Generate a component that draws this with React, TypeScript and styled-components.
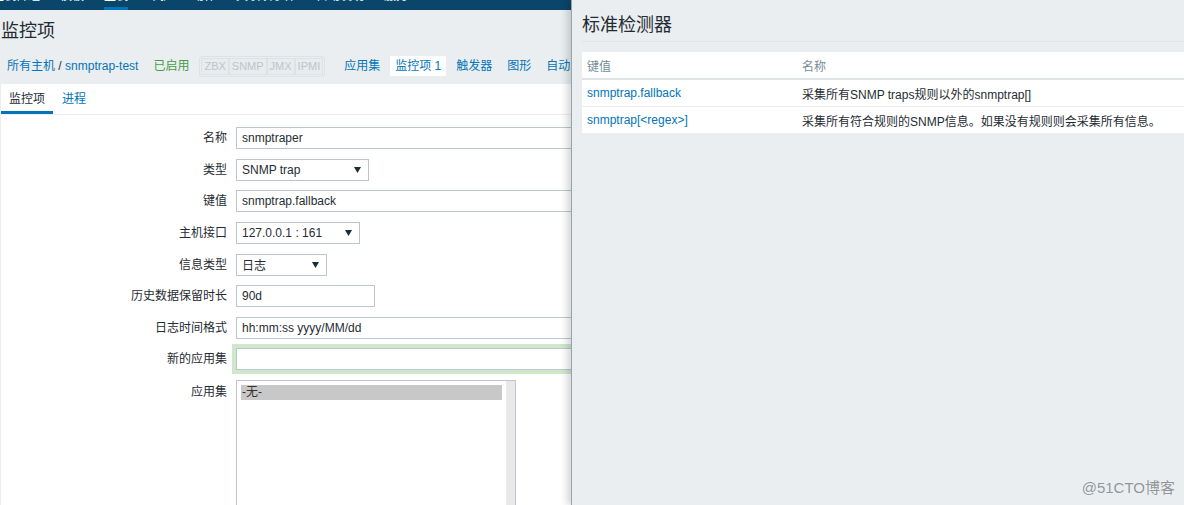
import React from 'react'
import styled, { createGlobalStyle } from 'styled-components'

const GlobalStyle = createGlobalStyle`
  html, body { margin: 0; padding: 0; }
  body {
    background: #ebeef0;
    font-family: Arial, "Liberation Sans", "Noto Sans CJK SC", sans-serif;
    font-size: 12px;
    color: #1f2c33;
  }
`

const Screen = styled.div`
  position: relative;
  width: 1184px;
  height: 505px;
  overflow: hidden;
  background: #ebeef0;
`

// the page underneath the popup; only its left part shows
const Page = styled.div`
  width: 571px;
  height: 505px;
  overflow: hidden;
`

const TopNav = styled.div`
  display: flex;
  height: 10px;
  background: #0a466a;
  overflow: hidden;
`
const NavItem = styled.div<{ $active?: boolean; $first?: boolean }>`
  position: relative;
  height: 10px;
  padding: 0 10px;
  margin-left: ${p => (p.$first ? '-18px' : '0')};
  color: #ffffff;
  &::after {
    content: '';
    display: ${p => (p.$active ? 'block' : 'none')};
    position: absolute;
    left: 10px;
    right: 10px;
    bottom: 0;
    height: 3px;
    background: #0275b8;
  }
`
const NavText = styled.span`
  display: block;
  margin-top: -11px;
  line-height: 14px;
  white-space: nowrap;
`

const Header = styled.div`
  display: flex;
  align-items: center;
  height: 38px;
  padding-left: 1px;
`
const Title = styled.h1`
  margin: 0;
  font-size: 18px;
  font-weight: normal;
  color: #1f2c33;
`

const Breadcrumbs = styled.div`
  display: flex;
  align-items: center;
  gap: 5px;
  height: 36px;
  padding-left: 2px;
  white-space: nowrap;
`
const Crumb = styled.span<{ $tone?: 'link' | 'green'; $selected?: boolean; $push?: number }>`
  padding: 3px 5px;
  margin-left: ${p => p.$push ?? 0}px;
  line-height: 14px;
  color: ${p => (p.$tone === 'green' ? '#429e47' : p.$tone === 'link' ? '#0275b8' : '#1f2c33')};
  background: ${p => (p.$selected ? '#ffffff' : 'transparent')};
`
const Link = styled.span`
  color: #0275b8;
`
const StatusGroup = styled.span`
  display: flex;
  padding: 1px;
  border: 1px solid #dde2e5;
  border-radius: 3px;
`
const StatusTag = styled.span`
  padding: 0 2px;
  border: 1px solid #dde2e5;
  background: #e8ecee;
  color: #bcc5ca;
  font-size: 11px;
  line-height: 15px;
`

const Content = styled.div`
  margin-left: 1px;
  height: 421px;
  background: #ffffff;
`
const Tabs = styled.div`
  display: flex;
  gap: 1px;
  height: 30px;
  border-bottom: 1px solid #ebeef0;
`
const Tab = styled.div<{ $active?: boolean }>`
  display: flex;
  align-items: center;
  box-sizing: border-box;
  height: 30px;
  padding: 0 8px;
  color: ${p => (p.$active ? '#1f2c33' : '#0275b8')};
  border-bottom: 3px solid ${p => (p.$active ? '#0275b8' : 'transparent')};
`

const Form = styled.div`
  display: grid;
  grid-template-columns: 226px 1fr;
  column-gap: 9px;
  row-gap: 9.625px;
  padding-top: 12px;
`
const Label = styled.div<{ $top?: boolean }>`
  text-align: right;
  line-height: 22px;
  align-self: ${p => (p.$top ? 'start' : 'center')};
  padding-top: ${p => (p.$top ? '1px' : '0')};
  white-space: nowrap;
`
const Field = styled.div<{ $width?: number; $focused?: boolean }>`
  display: flex;
  align-items: center;
  justify-content: space-between;
  box-sizing: border-box;
  width: ${p => p.$width ?? 453}px;
  height: 22px;
  padding: 0 5px;
  border: 1px solid #bcc7cd;
  background: #ffffff;
  color: #1f2c33;
  white-space: nowrap;
  box-shadow: ${p => (p.$focused ? '0 0 0 4px #cfe8cb' : 'none')};
`
const Arrow = styled.svg`
  width: 7px;
  height: 6px;
  margin-right: 2px;
  fill: #1f2c33;
`
const ListBox = styled.div`
  display: flex;
  box-sizing: border-box;
  width: 280px;
  height: 140px;
  border: 1px solid #bcc7cd;
  background: #ffffff;
`
const ListItems = styled.div`
  flex: 1;
  padding: 4px 4px 0 4px;
`
const ListOption = styled.div<{ $selected?: boolean }>`
  height: 15px;
  line-height: 15px;
  padding-left: 1px;
  color: #333;
  background: ${p => (p.$selected ? '#c8c8c8' : 'transparent')};
`
const ScrollTrack = styled.div`
  width: 9px;
  background: #e9e9e9;
`

const Overlay = styled.div`
  position: absolute;
  top: 0;
  left: 571px;
  right: 0;
  bottom: 0;
  background: #ebeef0;
  border-left: 1px solid #98a4ab;
  box-shadow: -4px 0 7px rgba(0, 0, 0, 0.16);
  overflow: hidden;
`
const OverlayHead = styled.div`
  display: flex;
  align-items: center;
  box-sizing: border-box;
  height: 42px;
  margin-left: 10px;
  padding-top: 4px;
  border-bottom: 1px solid #dfe4e7;
`
const OverlayTitle = styled.h2`
  margin: 0;
  font-size: 18px;
  font-weight: normal;
  color: #1f2c33;
`
const Table = styled.table`
  width: 640px;
  margin: 10px 0 0 10px;
  border-collapse: collapse;
  background: #ffffff;
  font-size: 12px;
`
const Th = styled.th<{ $w?: number }>`
  width: ${p => (p.$w ? `${p.$w}px` : 'auto')};
  height: 27px;
  padding: 0 5px;
  text-align: left;
  font-weight: normal;
  color: #768d99;
  border-bottom: 2px solid #dfe4e7;
  box-sizing: border-box;
`
const Td = styled.td<{ $link?: boolean }>`
  height: 26px;
  padding: 0 5px;
  color: ${p => (p.$link ? '#0275b8' : '#1f2c33')};
  border-bottom: 1px solid #ebeef0;
  white-space: nowrap;
`

const Watermark = styled.div`
  position: absolute;
  right: 9px;
  bottom: 8px;
  font-size: 15px;
  color: #8f959a;
  text-shadow: 0 0 1px #ffffff;
`

const navItems = ['主机群组', '模板', '主机', '维护', '动作', '关联项事件', '自动发现', '服务']

const DropArrow = () => (
  <Arrow viewBox="0 0 7 6">
    <polygon points="0,0 7,0 3.5,6" />
  </Arrow>
)

const App: React.FC = () => {
  return (
    <Screen>
      <GlobalStyle />
      <Page>
        <TopNav>
          {navItems.map((n, i) => (
            <NavItem key={n} $first={i === 0} $active={n === '主机'}>
              <NavText>{n}</NavText>
            </NavItem>
          ))}
        </TopNav>
        <Header>
          <Title>监控项</Title>
        </Header>
        <Breadcrumbs>
          <Crumb>
            <Link>所有主机</Link> / <Link>snmptrap-test</Link>
          </Crumb>
          <Crumb $tone="green">已启用</Crumb>
          <StatusGroup>
            <StatusTag>ZBX</StatusTag>
            <StatusTag>SNMP</StatusTag>
            <StatusTag>JMX</StatusTag>
            <StatusTag>IPMI</StatusTag>
          </StatusGroup>
          <Crumb $tone="link" $push={9}>应用集</Crumb>
          <Crumb $tone="link" $selected>监控项 1</Crumb>
          <Crumb $tone="link">触发器</Crumb>
          <Crumb $tone="link">图形</Crumb>
          <Crumb $tone="link">自动发现规则</Crumb>
        </Breadcrumbs>
        <Content>
          <Tabs>
            <Tab $active>监控项</Tab>
            <Tab>进程</Tab>
          </Tabs>
          <Form>
            <Label>名称</Label>
            <Field>snmptraper</Field>
            <Label>类型</Label>
            <Field $width={133}>SNMP trap<DropArrow /></Field>
            <Label>键值</Label>
            <Field>snmptrap.fallback</Field>
            <Label>主机接口</Label>
            <Field $width={124}>127.0.0.1 : 161<DropArrow /></Field>
            <Label>信息类型</Label>
            <Field $width={91}>日志<DropArrow /></Field>
            <Label>历史数据保留时长</Label>
            <Field $width={139}>90d</Field>
            <Label>日志时间格式</Label>
            <Field>hh:mm:ss yyyy/MM/dd</Field>
            <Label>新的应用集</Label>
            <Field $focused />
            <Label $top>应用集</Label>
            <ListBox>
              <ListItems>
                <ListOption $selected>-无-</ListOption>
              </ListItems>
              <ScrollTrack />
            </ListBox>
          </Form>
        </Content>
      </Page>

      <Overlay>
        <OverlayHead>
          <OverlayTitle>标准检测器</OverlayTitle>
        </OverlayHead>
        <Table>
          <thead>
            <tr>
              <Th $w={215}>键值</Th>
              <Th>名称</Th>
            </tr>
          </thead>
          <tbody>
            <tr>
              <Td $link>snmptrap.fallback</Td>
              <Td>采集所有SNMP traps规则以外的snmptrap[]</Td>
            </tr>
            <tr>
              <Td $link>snmptrap[&lt;regex&gt;]</Td>
              <Td>采集所有符合规则的SNMP信息。如果没有规则则会采集所有信息。</Td>
            </tr>
          </tbody>
        </Table>
      </Overlay>
      <Watermark>@51CTO博客</Watermark>
    </Screen>
  )
}

export default App
